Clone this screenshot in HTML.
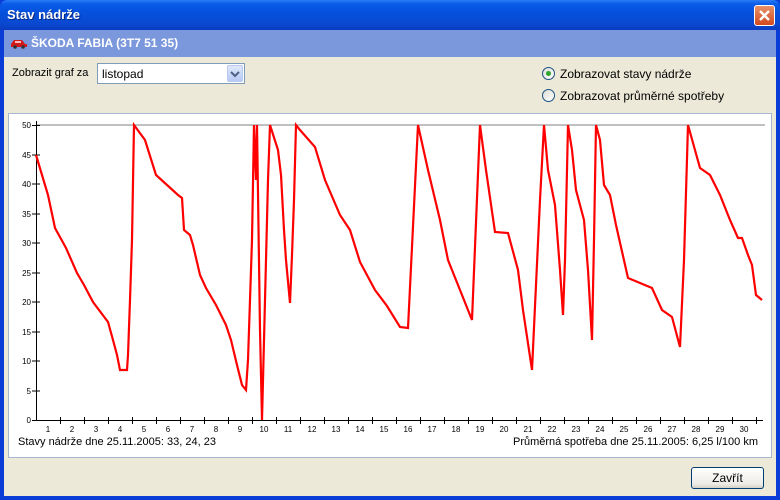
<!DOCTYPE html>
<html><head><meta charset="utf-8"><style>
*{margin:0;padding:0;box-sizing:border-box}
body{width:780px;height:500px;overflow:hidden;background:#0a3cd8;font-family:"Liberation Sans",Tahoma,sans-serif;font-size:11px;color:#000;position:relative}
.title{position:absolute;left:0;top:0;width:780px;height:30px;background:linear-gradient(#2a7cf4 0,#0a5ce8 4px,#0551de 12px,#0a48d0 24px,#0a3cc0 30px);border-radius:7px 7px 0 0}
.title span{position:absolute;left:7px;top:7px;color:#fff;font-weight:bold;font-size:13px;text-shadow:1px 1px #0a2a80}
.close{position:absolute;left:754px;top:5px;width:21px;height:21px;border:1px solid #fff;border-radius:3px;background:linear-gradient(#e8906a,#d24a1e);}
.client{position:absolute;left:4px;top:30px;width:772px;height:466px;background:#ece9d8}
.band{position:absolute;left:0;top:0;width:772px;height:27px;background:#7b98dd}
.band span{position:absolute;left:27px;top:6px;color:#fff;font-weight:bold;font-size:12px}
.t{position:absolute;white-space:nowrap}
.combo{position:absolute;left:93px;top:33px;width:148px;height:21px;border:1px solid #7f9db9;background:#fff}
.combo span{position:absolute;left:4px;top:3px;font-size:12px}
.cb{position:absolute;right:1px;top:1px;width:16px;height:17px;background:linear-gradient(#dfe8fb,#b7caf5);border:1px solid #b9c9ef;border-radius:2px}
.radio{position:absolute;width:13px;height:13px;border:1px solid #1c5180;border-radius:50%;background:linear-gradient(135deg,#dcdcd6,#fff)}
.dot{position:absolute;left:3px;top:3px;width:5px;height:5px;border-radius:50%;background:#2fa52f}
.panel{position:absolute;left:4px;top:83px;width:764px;height:345px;background:#fff;border:1px solid #a6b8cf}
.btn{position:absolute;left:687px;top:437px;width:73px;height:22px;border:1px solid #003c74;border-radius:3px;background:linear-gradient(#fff,#ecebe6 80%,#d6d0c5);text-align:center;line-height:20px;font-size:12px}
</style></head><body>
<div class="title"><span>Stav nádrže</span>
<div class="close"><svg width="19" height="19"><path d="M5 5L14 14M14 5L5 14" stroke="#fff" stroke-width="2.4"/></svg></div></div>
<div class="client">
<div class="band"><svg style="position:absolute;left:6px;top:8px" width="18" height="11"><path d="M1 6L4 2H12L15 6H17V9H1Z" fill="#d21a1a"/><circle cx="5" cy="9" r="1.8" fill="#333"/><circle cx="13" cy="9" r="1.8" fill="#333"/><rect x="5" y="3" width="6" height="2" fill="#fbb"/></svg><span>ŠKODA FABIA (3T7 51 35)</span></div>
<div class="t" style="left:8px;top:37px;font-size:11px">Zobrazit graf za</div>
<div class="combo"><span>listopad</span><div class="cb"><svg width="14" height="15"><path d="M3 6L7 10L11 6" stroke="#4d6185" stroke-width="2" fill="none"/></svg></div></div>
<div class="radio" style="left:538px;top:37px"><div class="dot"></div></div>
<div class="t" style="left:556px;top:37px;font-size:12px">Zobrazovat stavy nádrže</div>
<div class="radio" style="left:538px;top:59px"></div>
<div class="t" style="left:556px;top:59px;font-size:12px">Zobrazovat průměrné spotřeby</div>
<div class="panel"></div>
<div class="btn">Zavřít</div>
</div>
<svg style="position:absolute;left:0;top:0" width="780" height="500" font-family="Liberation Sans,sans-serif" font-size="8">
<line x1="36" y1="125" x2="765" y2="125" stroke="#808080"/>
<line x1="36.5" y1="121" x2="36.5" y2="420" stroke="#000"/>
<line x1="36" y1="420.5" x2="763" y2="420.5" stroke="#000"/>
<g stroke="#000">
<path d="M32 125.5H40M32 155H40M32 184H40M32 214H40M32 243H40M32 273H40M32 302H40M32 332H40M32 361H40M32 391H40M32 420.5H40"/>
<path d="M60.5 417v7M84.5 417v7M108.5 417v7M132.5 417v7M156.5 417v7M180.5 417v7M204.5 417v7M228.5 417v7M252.5 417v7M276.5 417v7M300.5 417v7M324.5 417v7M348.5 417v7M372.5 417v7M396.5 417v7M420.5 417v7M444.5 417v7M468.5 417v7M492.5 417v7M516.5 417v7M540.5 417v7M564.5 417v7M588.5 417v7M612.5 417v7M636.5 417v7M660.5 417v7M684.5 417v7M708.5 417v7M732.5 417v7M756.5 417v7"/>
</g>
<g text-anchor="end">
<text x="31" y="128">50</text><text x="31" y="158">45</text><text x="31" y="187">40</text><text x="31" y="217">35</text><text x="31" y="246">30</text><text x="31" y="276">25</text><text x="31" y="305">20</text><text x="31" y="335">15</text><text x="31" y="364">10</text><text x="31" y="394">5</text><text x="31" y="423">0</text>
</g>
<g text-anchor="middle">
<text x="48" y="432">1</text><text x="72" y="432">2</text><text x="96" y="432">3</text><text x="120" y="432">4</text><text x="144" y="432">5</text><text x="168" y="432">6</text><text x="192" y="432">7</text><text x="216" y="432">8</text><text x="240" y="432">9</text><text x="264" y="432">10</text><text x="288" y="432">11</text><text x="312" y="432">12</text><text x="336" y="432">13</text><text x="360" y="432">14</text><text x="384" y="432">15</text><text x="408" y="432">16</text><text x="432" y="432">17</text><text x="456" y="432">18</text><text x="480" y="432">19</text><text x="504" y="432">20</text><text x="528" y="432">21</text><text x="552" y="432">22</text><text x="576" y="432">23</text><text x="600" y="432">24</text><text x="624" y="432">25</text><text x="648" y="432">26</text><text x="672" y="432">27</text><text x="696" y="432">28</text><text x="720" y="432">29</text><text x="744" y="432">30</text>
</g>
<polyline fill="none" stroke="#f00" stroke-width="2.2" points="36,155 48,195 55,228 66,248 77,273 84,285 93,302 108,322 113,340 117,355 120,370 127,370 128,355 130,300 132,240 134,125 145,140 156,175 178,195 182,198 184,230 190,235 193,245 200,275 206,288 216,305 226,325 231,340 237,365 242,385 246,390 248,360 250,300 252,240 254,125 256,180 257,125 260,330 262,420 263,380 265,300 268,180 270,125 278,150 281,175 284,230 286,260 290,303 292,255 294,200 296,125 300,130 315,147 325,180 340,215 350,230 360,262 375,290 387,306 400,327 408,328 418,125 428,170 440,220 448,260 460,290 472,320 480,125 486,170 495,232 508,233 518,270 523,310 532,370 540,200 544,125 548,170 555,205 560,270 563,315 565,260 568,125 572,150 576,190 584,220 588,270 592,340 594,240 596,125 600,140 604,185 610,195 616,225 628,278 640,283 652,288 662,310 672,317 680,347 684,260 688,125 700,168 710,175 720,195 730,220 738,238 742,238 748,255 752,265 756,295 762,300"/>
<text x="18" y="445" font-size="11">Stavy nádrže dne 25.11.2005: 33, 24, 23</text>
<text x="758" y="445" font-size="11" text-anchor="end">Průměrná spotřeba dne 25.11.2005: 6,25 l/100 km</text>
</svg>
</body></html>
